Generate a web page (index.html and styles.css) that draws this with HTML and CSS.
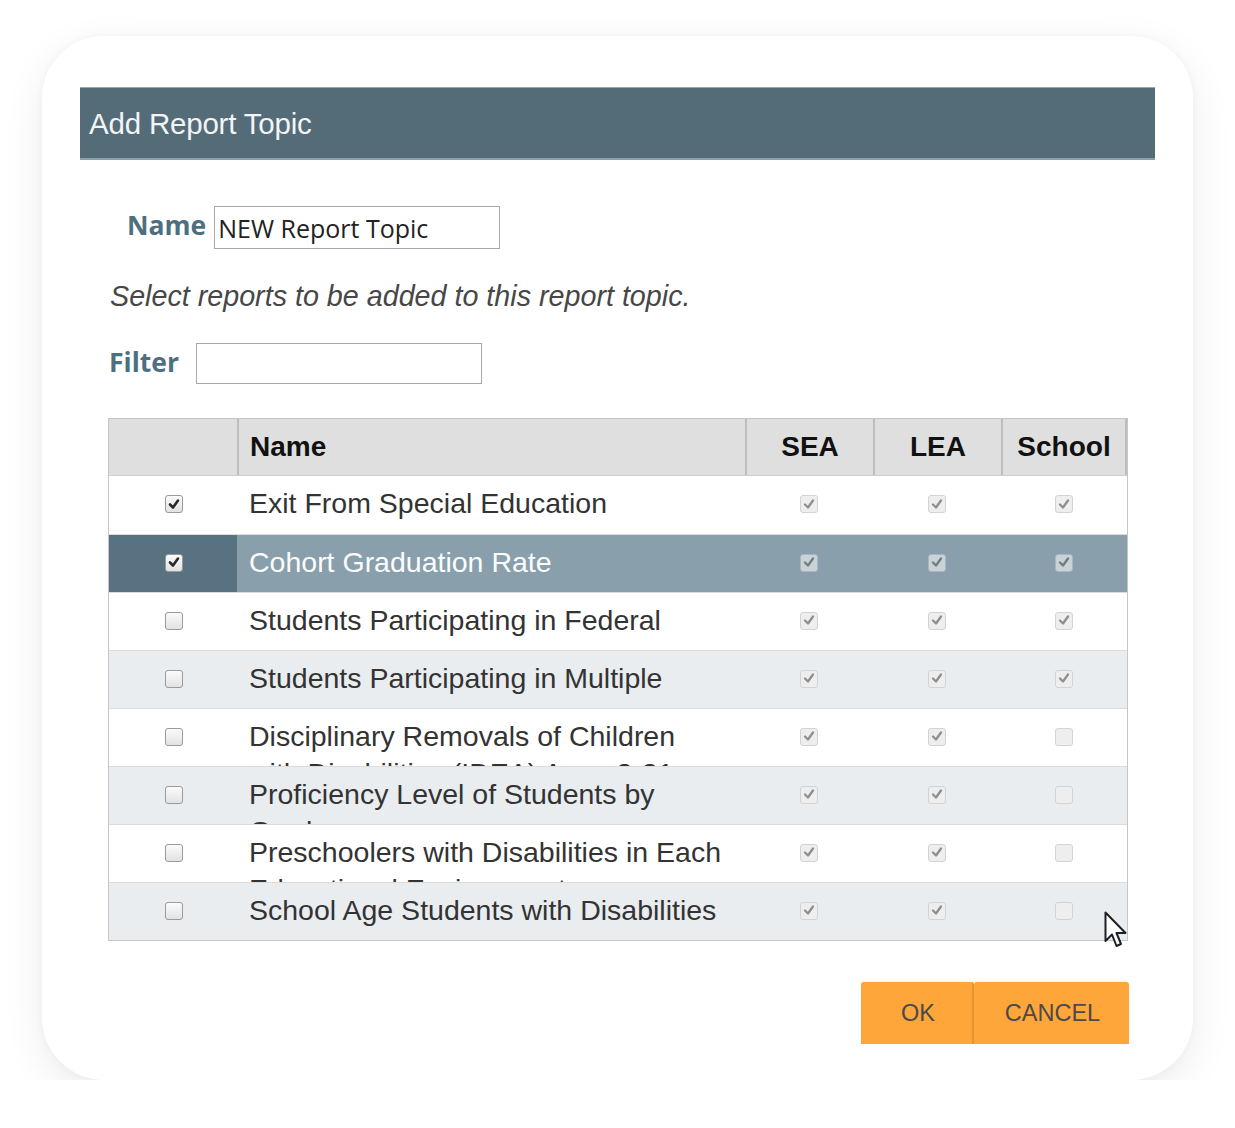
FILE: index.html
```html
<!DOCTYPE html>
<html>
<head>
<meta charset="utf-8">
<link rel="stylesheet" href="styles.css">
</head>
<body>
<div class="card">
  <div class="dialog-head">Add Report Topic</div>
  <div class="form">
    <div class="field name-field">
      <label class="lbl">Name</label>
      <div class="input name-input">NEW Report Topic</div>
    </div>
    <p class="hint">Select reports to be added to this report topic.</p>
    <div class="field filter-field">
      <label class="lbl">Filter</label>
      <div class="input filter-input"></div>
    </div>
  </div>

  <div class="grid">
    <div class="row head">
      <div class="c"></div>
      <div class="c name">Name</div>
      <div class="c mid">SEA</div>
      <div class="c mid">LEA</div>
      <div class="c mid last">School</div>
    </div>

    <div class="row">
      <div class="c sel"><span class="cb on"><svg viewBox="0 0 18 18"><path d="M5 9.5 L8 12.5 L13 5.5"/></svg></span></div>
      <div class="c name"><div class="txt">Exit From Special Education</div></div>
      <div class="c mid"><span class="cb dis"><svg viewBox="0 0 18 18"><path d="M5 9.5 L8 12.5 L13 5.5"/></svg></span></div>
      <div class="c mid"><span class="cb dis"><svg viewBox="0 0 18 18"><path d="M5 9.5 L8 12.5 L13 5.5"/></svg></span></div>
      <div class="c mid"><span class="cb dis"><svg viewBox="0 0 18 18"><path d="M5 9.5 L8 12.5 L13 5.5"/></svg></span></div>
    </div>

    <div class="row active">
      <div class="c sel"><span class="cb on"><svg viewBox="0 0 18 18"><path d="M5 9.5 L8 12.5 L13 5.5"/></svg></span></div>
      <div class="c name"><div class="txt">Cohort Graduation Rate</div></div>
      <div class="c mid"><span class="cb dis"><svg viewBox="0 0 18 18"><path d="M5 9.5 L8 12.5 L13 5.5"/></svg></span></div>
      <div class="c mid"><span class="cb dis"><svg viewBox="0 0 18 18"><path d="M5 9.5 L8 12.5 L13 5.5"/></svg></span></div>
      <div class="c mid"><span class="cb dis"><svg viewBox="0 0 18 18"><path d="M5 9.5 L8 12.5 L13 5.5"/></svg></span></div>
    </div>

    <div class="row">
      <div class="c sel"><span class="cb"></span></div>
      <div class="c name"><div class="txt">Students Participating in Federal</div></div>
      <div class="c mid"><span class="cb dis"><svg viewBox="0 0 18 18"><path d="M5 9.5 L8 12.5 L13 5.5"/></svg></span></div>
      <div class="c mid"><span class="cb dis"><svg viewBox="0 0 18 18"><path d="M5 9.5 L8 12.5 L13 5.5"/></svg></span></div>
      <div class="c mid"><span class="cb dis"><svg viewBox="0 0 18 18"><path d="M5 9.5 L8 12.5 L13 5.5"/></svg></span></div>
    </div>

    <div class="row alt">
      <div class="c sel"><span class="cb"></span></div>
      <div class="c name"><div class="txt">Students Participating in Multiple</div></div>
      <div class="c mid"><span class="cb dis"><svg viewBox="0 0 18 18"><path d="M5 9.5 L8 12.5 L13 5.5"/></svg></span></div>
      <div class="c mid"><span class="cb dis"><svg viewBox="0 0 18 18"><path d="M5 9.5 L8 12.5 L13 5.5"/></svg></span></div>
      <div class="c mid"><span class="cb dis"><svg viewBox="0 0 18 18"><path d="M5 9.5 L8 12.5 L13 5.5"/></svg></span></div>
    </div>

    <div class="row">
      <div class="c sel"><span class="cb"></span></div>
      <div class="c name"><div class="txt">Disciplinary Removals of Children with Disabilities (IDEA) Ages 3-21</div></div>
      <div class="c mid"><span class="cb dis"><svg viewBox="0 0 18 18"><path d="M5 9.5 L8 12.5 L13 5.5"/></svg></span></div>
      <div class="c mid"><span class="cb dis"><svg viewBox="0 0 18 18"><path d="M5 9.5 L8 12.5 L13 5.5"/></svg></span></div>
      <div class="c mid"><span class="cb dis"></span></div>
    </div>

    <div class="row alt">
      <div class="c sel"><span class="cb"></span></div>
      <div class="c name"><div class="txt">Proficiency Level of Students by Grade</div></div>
      <div class="c mid"><span class="cb dis"><svg viewBox="0 0 18 18"><path d="M5 9.5 L8 12.5 L13 5.5"/></svg></span></div>
      <div class="c mid"><span class="cb dis"><svg viewBox="0 0 18 18"><path d="M5 9.5 L8 12.5 L13 5.5"/></svg></span></div>
      <div class="c mid"><span class="cb dis"></span></div>
    </div>

    <div class="row">
      <div class="c sel"><span class="cb"></span></div>
      <div class="c name"><div class="txt">Preschoolers with Disabilities in Each Educational Environment</div></div>
      <div class="c mid"><span class="cb dis"><svg viewBox="0 0 18 18"><path d="M5 9.5 L8 12.5 L13 5.5"/></svg></span></div>
      <div class="c mid"><span class="cb dis"><svg viewBox="0 0 18 18"><path d="M5 9.5 L8 12.5 L13 5.5"/></svg></span></div>
      <div class="c mid"><span class="cb dis"></span></div>
    </div>

    <div class="row alt lastrow">
      <div class="c sel"><span class="cb"></span></div>
      <div class="c name"><div class="txt">School Age Students with Disabilities</div></div>
      <div class="c mid"><span class="cb dis"><svg viewBox="0 0 18 18"><path d="M5 9.5 L8 12.5 L13 5.5"/></svg></span></div>
      <div class="c mid"><span class="cb dis"><svg viewBox="0 0 18 18"><path d="M5 9.5 L8 12.5 L13 5.5"/></svg></span></div>
      <div class="c mid"><span class="cb dis"></span></div>
    </div>

    <svg class="cursor" viewBox="0 0 26 40" width="26" height="40">
      <path d="M1.5 1.5 L1.5 30 L8 23.5 L12.5 35 L17 33 L12.5 22 L21.5 22 Z" fill="#fff" stroke="#1d2126" stroke-width="2" stroke-linejoin="round"/>
    </svg>
  </div>

  <div class="actions">
    <button class="btn ok">OK</button>
    <button class="btn cancel">CANCEL</button>
  </div>
</div>
</body>
</html>
```

FILE: styles.css
```css
html, body {
  margin: 0;
  padding: 0;
  background: #ffffff;
}

body {
  font-family: "Liberation Sans", Arial, sans-serif;
  color: #333;
}

.card {
  margin: 36px 0 0 42px;
  width: 1151px;
  height: 1044px;
  box-sizing: border-box;
  padding: 51px 38px 0 38px;
  background: #fff;
  border-radius: 62px;
  box-shadow: 0 12px 40px rgba(0, 0, 0, 0.08), 0 0 8px rgba(0, 0, 0, 0.03);
}

.dialog-head {
  height: 73px;
  background: #546b78;
  border-top: 1px solid #9aa6ad;
  border-bottom: 2px solid #8e9ea8;
  box-sizing: border-box;
  color: #f2f4f5;
  font-size: 29.5px;
  line-height: 72px;
  padding-left: 9px;
  letter-spacing: -0.2px;
}

.form {
  display: flex;
  flex-direction: column;
}

.field {
  display: flex;
  align-items: center;
}

.lbl {
  font-family: "Open Sans", sans-serif;
  font-weight: 700;
  font-size: 26.5px;
  color: #4d6f7f;
}

.name-field {
  margin-top: 46px;
  padding-left: 47px;
}

.name-field .lbl {
  margin-right: 8px;
  margin-top: -6px;
}

.input {
  box-sizing: border-box;
  border: 1.5px solid #a9a9a9;
  background: #fff;
  font-family: "Open Sans", sans-serif;
  font-size: 25px;
  color: #222;
  padding-left: 3px;
}

.name-input {
  width: 286px;
  height: 43px;
  line-height: 42px;
}

.hint {
  margin: 30px 0 0 30px;
  font-style: italic;
  font-size: 28.7px;
  color: #474747;
  line-height: 34px;
}

.filter-field {
  margin-top: 30px;
  padding-left: 29px;
}

.filter-field .lbl {
  margin-right: 17px;
  margin-top: -4px;
}

.filter-input {
  width: 286px;
  height: 41px;
}

.grid {
  position: relative;
  margin: 34px 0 0 28px;
  width: 1020px;
  border: 1.5px solid #c6c6c6;
  box-sizing: border-box;
}

.row {
  display: grid;
  grid-template-columns: 128px 508px 128px 128px 1fr;
  height: 58px;
  border-top: 1.5px solid #dcdcdc;
  box-sizing: border-box;
  background: #fff;
}

.row.alt {
  background: #e9edf0;
}

.row.head {
  border-top: none;
  background: #dfdfdf;
  height: 57px;
  border-bottom: 1.5px solid #cfcfcf;
}

.row.head + .row {
  border-top: none;
}

.row.head .c {
  font-weight: 700;
  font-size: 28px;
  color: #111;
  display: flex;
  align-items: center;
  border-left: 2px solid #bdbdbd;
}

.row.head .c:first-child {
  border-left: none;
}

.row.head .c.name {
  padding-left: 11px;
}

.row.head .c.mid {
  justify-content: center;
}

.row.head .c.last {
  border-right: 2px solid #bdbdbd;
}

.c {
  overflow: hidden;
  min-width: 0;
}

.c.sel,
.c.mid {
  display: flex;
  align-items: center;
  justify-content: center;
}

.c.name .txt {
  font-size: 28.5px;
  color: #333;
  line-height: 37px;
  padding: 9px 0 0 12px;
  width: 496px;
  height: 57px;
  box-sizing: border-box;
  overflow: hidden;
}

.row.active {
  background: #89a0ac;
}

.row.active .c.sel {
  background: #587282;
}

.row.active .c.name .txt {
  color: #fbfcfc;
}

.cb {
  display: inline-block;
  width: 18px;
  height: 18px;
  box-sizing: border-box;
  border: 1.5px solid #9a9a9a;
  border-radius: 3px;
  background: linear-gradient(#fbfbfb, #e2e2e2);
  position: relative;
  margin-top: -2px;
  margin-left: 2px;
}

.cb svg {
  position: absolute;
  left: -1.5px;
  top: -1.5px;
  width: 18px;
  height: 18px;
}

.cb svg path {
  fill: none;
  stroke: #2a2a2a;
  stroke-width: 2.6;
  stroke-linecap: round;
  stroke-linejoin: round;
}

.cb.dis {
  border-color: #d3d3d3;
  background: #eeeeee;
  margin-left: 0;
}

.cb.dis svg path {
  stroke: #8f8f8f;
  stroke-width: 2.3;
}

.row.active .cb.dis {
  border-color: #a9b7be;
  background: #c9d2d6;
}

.row.active .cb.dis svg path {
  stroke: #6e7d85;
}

.cursor {
  position: absolute;
  right: -3px;
  top: 492px;
}

.actions {
  display: flex;
  justify-content: flex-end;
  margin: 41px 26px 0 0;
}

.btn {
  height: 62px;
  border: none;
  background: #ffa63a;
  color: #4a4a4a;
  font-family: "Liberation Sans", Arial, sans-serif;
  font-size: 23.5px;
  border-radius: 3px 3px 0 0;
  padding: 0;
  box-shadow: 0 -1px 2px rgba(0, 0, 0, 0.06);
}

.btn.ok {
  width: 113px;
  border-right: 2px solid #e89530;
  padding-left: 3px;
}

.btn.cancel {
  width: 155px;
  padding-left: 2px;
}
```
